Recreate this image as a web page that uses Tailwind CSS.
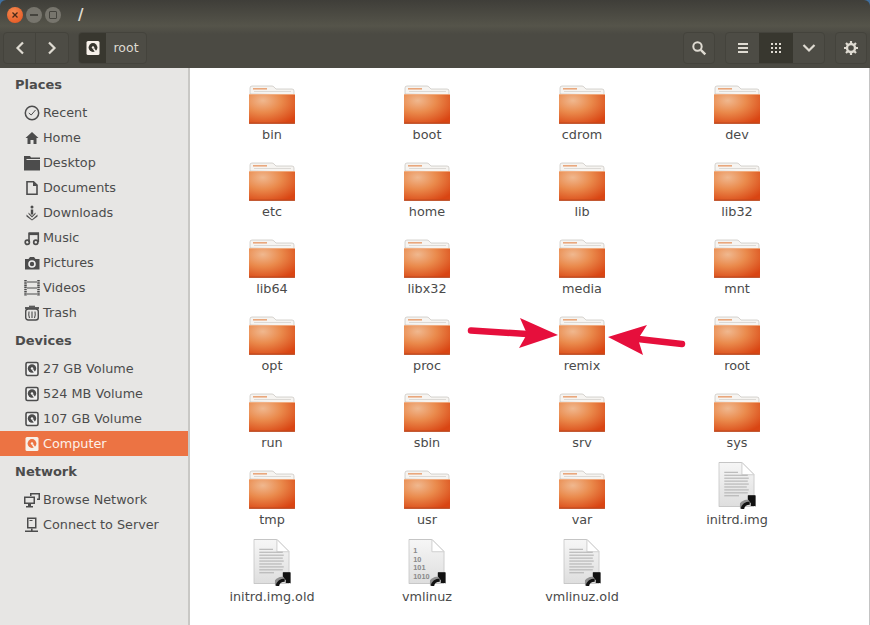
<!DOCTYPE html>
<html><head><meta charset="utf-8"><script src="https://cdn.jsdelivr.net/npm/@tailwindcss/browser@4"></script></head>
<body class="m-0 w-[870px] h-[625px] overflow-hidden bg-[#3f6f9f] font-['DejaVu_Sans',sans-serif] text-[12.8px] relative">
<svg width="0" height="0" class="absolute">
<defs>
<radialGradient id="fg" cx="0.3" cy="0.22" r="0.9"><stop offset="0" stop-color="#f0b88f"/><stop offset="0.45" stop-color="#ea8a4c"/><stop offset="1" stop-color="#d94513"/></radialGradient>
<linearGradient id="pg" x1="0" y1="0" x2="0" y2="1"><stop offset="0" stop-color="#f6f6f6"/><stop offset="1" stop-color="#dedede"/></linearGradient>
</defs>
<symbol id="folder" viewBox="0 0 46 38">
<path d="M1 8V2q0-2 2-2h20q1 0 2 1l2 2h16q2 0 2 2v4z" fill="#f6f4f1" stroke="#bdb9b4" stroke-width=".6"/>
<rect x="4" y="2" width="14" height="1.6" fill="#e9a77c"/>
<rect x="5" y="5" width="37" height="1" fill="#dcd9d5"/>
<rect x="0" y="8" width="46" height="29.5" rx="1" fill="url(#fg)"/>
<rect x="0" y="36.6" width="46" height="1.2" fill="#b9481f"/>
<rect x="0" y="8" width="46" height=".8" fill="#f2b48b"/>
</symbol>
<symbol id="link" viewBox="0 0 16 14">
<path d="M0 13.500C0 9 4 6 9 6" fill="none" stroke="#8f8f8f" stroke-width="3.500"/>
<path d="M2.500 14C3 10.500 6 8 10 8" fill="none" stroke="#111" stroke-width="3.500"/>
<path d="M8 0H16V12z" fill="#111"/>
<path d="M8 0H16V11H11V8L8 4z" fill="#111"/>
</symbol>
<symbol id="page" viewBox="0 0 37 46">
<path d="M.5.5H24L36.5 13V45.5H.5z" fill="url(#pg)" stroke="#c4c4c4"/>
<path d="M24 .5V13H36.5z" fill="#fff" stroke="#cfcfcf"/>
</symbol>
<symbol id="doc" viewBox="0 0 39 49">
<use href="#page" width="37" height="46"/>
<g fill="#adadad"><rect x="6" y="10" width="14" height="1"/><rect x="6" y="13" width="24" height="1"/><rect x="6" y="16" width="25" height="1"/><rect x="6" y="19" width="24" height="1"/><rect x="6" y="22" width="25" height="1"/><rect x="6" y="25" width="23" height="1"/><rect x="6" y="28" width="25" height="1"/><rect x="6" y="31" width="24" height="1"/><rect x="6" y="34" width="15" height="1"/></g>
<use href="#link" x="22" y="34" width="16" height="14"/>
</symbol>
<symbol id="disk" viewBox="0 0 16 16">
<rect x="2" y="1.500" width="12" height="13" rx="1.500" fill="#f2f2f2" stroke="currentColor" stroke-width="1.600"/>
<circle cx="8" cy="7.500" r="4.200" fill="currentColor"/><circle cx="8" cy="7.500" r="1.200" fill="#f2f2f2"/>
<path d="M8.500 8.500l2.600 3.600" stroke="#f2f2f2" stroke-width="1.400"/>
</symbol>
<symbol id="disk2" viewBox="0 0 16 16">
<rect x="1.500" y="1" width="13" height="14" rx="1.500" fill="#f7f1ea"/>
<circle cx="8" cy="7.500" r="4.400" fill="currentColor"/><circle cx="8" cy="7.500" r="1.200" fill="#f7f1ea"/>
<path d="M8.500 8.500l2.800 4" stroke="#f7f1ea" stroke-width="1.500"/>
</symbol>
</svg>

<!-- header -->
<header class="h-[68px] rounded-t-[6px] overflow-hidden bg-[linear-gradient(#3f3e39,#55544a_38%,#4b4a43_50%,#4b4a43)] flex flex-col">
  <div class="h-[30px] flex items-center pl-[7px] gap-[3px] text-[#dfdbd2]">
    <span class="w-[16px] h-[16px] rounded-full bg-[radial-gradient(circle_at_40%_30%,#f58a50,#e3501c)] flex items-center justify-center"><svg width="8" height="8" viewBox="0 0 8 8"><path d="M1.500 1.500l5 5M6.500 1.500l-5 5" stroke="#4a2a18" stroke-width="1.300"/></svg></span>
    <span class="w-[16px] h-[16px] rounded-full bg-[#77756d] flex items-center justify-center"><span class="w-[8px] h-[1.500px] bg-[#45443e]"></span></span>
    <span class="w-[16px] h-[16px] rounded-full bg-[#77756d] flex items-center justify-center"><span class="w-[8px] h-[8px] border-[1.500px] border-[#45443e] rounded-[1px]"></span></span>
    <span class="ml-[14px] text-[15px] font-bold">/</span>
  </div>
  <div class="h-[38px] flex items-start pt-[2px] px-[3px] text-[#dfdbd2]">
    <div class="flex h-[32px] w-[66px] rounded-[4px] border border-[#44433c] bg-[#4d4c45]">
      <span class="w-[32px] border-r border-[#44433c] flex items-center justify-center"><svg width="10" height="14" viewBox="0 0 10 14"><path d="M8 1.500L2.500 7 8 12.500" fill="none" stroke="currentColor" stroke-width="2.200"/></svg></span>
      <span class="flex-1 flex items-center justify-center"><svg width="10" height="14" viewBox="0 0 10 14"><path d="M2 1.500L7.500 7 2 12.500" fill="none" stroke="currentColor" stroke-width="2.200"/></svg></span>
    </div>
    <div class="flex h-[32px] w-[69px] ml-[9px] rounded-[4px] border border-[#44433c] bg-[#4d4c45] overflow-hidden">
      <span class="w-[27px] bg-[#38372f] flex items-center justify-center text-[#38372f]"><svg width="16" height="16"><use href="#disk2"/></svg></span>
      <span class="flex-1 flex items-center justify-center text-[12.500px]">root</span>
    </div>
    <div class="ml-auto flex h-[32px] w-[32px] rounded-[4px] border border-[#44433c] bg-[#4d4c45] items-center justify-center"><svg width="16" height="16" viewBox="0 0 16 16"><circle cx="6.500" cy="6.500" r="4.200" fill="none" stroke="currentColor" stroke-width="2"/><path d="M9.800 9.800l4.500 4.500" stroke="currentColor" stroke-width="2.400"/></svg></div>
    <div class="ml-[10px] flex h-[32px] w-[100px] rounded-[4px] border border-[#44433c] bg-[#4d4c45] overflow-hidden">
      <span class="w-[33px] flex items-center justify-center"><svg width="12" height="12" viewBox="0 0 12 12" fill="currentColor"><rect x="1" y="1" width="10" height="2"/><rect x="1" y="5" width="10" height="2"/><rect x="1" y="9" width="10" height="2"/></svg></span>
      <span class="w-[34px] bg-[#38372f] flex items-center justify-center"><svg width="12" height="12" viewBox="0 0 12 12" fill="currentColor"><rect x="1" y="1" width="2" height="2"/><rect x="5" y="1" width="2" height="2"/><rect x="9" y="1" width="2" height="2"/><rect x="1" y="5" width="2" height="2"/><rect x="5" y="5" width="2" height="2"/><rect x="9" y="5" width="2" height="2"/><rect x="1" y="9" width="2" height="2"/><rect x="5" y="9" width="2" height="2"/><rect x="9" y="9" width="2" height="2"/></svg></span>
      <span class="flex-1 flex items-center justify-center"><svg width="14" height="10" viewBox="0 0 14 10"><path d="M1.500 2L7 7.500 12.500 2" fill="none" stroke="currentColor" stroke-width="2.200"/></svg></span>
    </div>
    <div class="ml-[10px] flex h-[32px] w-[32px] rounded-[4px] border border-[#44433c] bg-[#4d4c45] items-center justify-center"><svg width="16" height="16" viewBox="0 0 16 16"><circle cx="8" cy="8" r="4" fill="none" stroke="currentColor" stroke-width="2.400"/><path d="M8 1v3M8 12v3M1 8h3M12 8h3M3 3l2.200 2.200M10.800 10.800L13 13M13 3l-2.200 2.200M5.200 10.800L3 13" stroke="currentColor" stroke-width="2.200"/></svg></div>
  </div>
</header>

<div class="flex h-[557px]">
  <!-- sidebar -->
  <aside class="w-[190px] shrink-0 bg-[#e7e6e4] border-r-2 border-[#c9c8c5] text-[#4c4c4c]">
    <h3 class="h-[32px] pl-[15px] pt-[2px] flex items-center font-bold text-[13px]">Places</h3>
    <ul>
      <li class="h-[25px] pl-[24px] flex items-center gap-[3px]"><svg class="w-[16px] h-[16px]" viewBox="0 0 16 16"><circle cx="8" cy="8" r="6.700" fill="none" stroke="currentColor" stroke-width="1.500"/><path d="M4.800 8l2.400 2L11.500 5" fill="none" stroke="currentColor" stroke-width="1"/></svg>Recent</li>
      <li class="h-[25px] pl-[24px] flex items-center gap-[3px]"><svg class="w-[16px] h-[16px]" viewBox="0 0 16 16" fill="currentColor"><path d="M8 2L1.500 8H3.500V14H6.500V10H9.500V14H12.500V8H14.500z"/></svg>Home</li>
      <li class="h-[25px] pl-[24px] flex items-center gap-[3px]"><svg class="w-[16px] h-[16px]" viewBox="0 0 16 16" fill="currentColor"><path d="M0 1H6L7 2.500H16V4H2.500V5H16V15.500H0z"/></svg>Desktop</li>
      <li class="h-[25px] pl-[24px] flex items-center gap-[3px]"><svg class="w-[16px] h-[16px]" viewBox="0 0 16 16"><path d="M3 1.700H9.500L13 5V14.300H3z" fill="none" stroke="currentColor" stroke-width="1.600"/><path d="M9 1.500V6H13.500" fill="currentColor"/></svg>Documents</li>
      <li class="h-[25px] pl-[24px] flex items-center gap-[3px]"><svg class="w-[16px] h-[16px]" viewBox="0 0 16 16" fill="currentColor"><circle cx="8" cy="2" r="1.500"/><rect x="6.800" y="4.500" width="2.400" height="5"/><path d="M4.500 7.500L8 11l3.500-3.500v1.500L8 12.500 4.500 9z"/><path d="M2.500 9.500L8 14.500l5.500-5v2L8 15.500l-5.500-4z"/></svg>Downloads</li>
      <li class="h-[25px] pl-[24px] flex items-center gap-[3px]"><svg class="w-[16px] h-[16px]" viewBox="0 0 16 16"><path d="M5 12V3.200H14.300V12" fill="none" stroke="currentColor" stroke-width="1.600"/><rect x="5" y="2.500" width="10" height="2.600" fill="currentColor"/><circle cx="3.300" cy="12.300" r="2.100" fill="none" stroke="currentColor" stroke-width="1.700"/><circle cx="11.800" cy="12.300" r="2.100" fill="none" stroke="currentColor" stroke-width="1.700"/></svg>Music</li>
      <li class="h-[25px] pl-[24px] flex items-center gap-[3px]"><svg class="w-[16px] h-[16px]" viewBox="0 0 16 16"><path d="M1 4H4.500L6 2H10L11.500 4H15.500V14.500H1z" fill="currentColor"/><circle cx="8" cy="9" r="3" fill="none" stroke="#eee" stroke-width="1.600"/></svg>Pictures</li>
      <li class="h-[25px] pl-[24px] flex items-center gap-[3px]"><svg class="w-[16px] h-[16px]" viewBox="0 0 16 16" fill="none" stroke="currentColor"><path d="M1.500 0V16M14.500 0V16" stroke-width="2.500" stroke-dasharray="1.500 .7"/><path d="M3 2H13M3 8H13M3 14H13" stroke-width="1.200"/></svg>Videos</li>
      <li class="h-[25px] pl-[24px] flex items-center gap-[3px]"><svg class="w-[16px] h-[16px]" viewBox="0 0 16 16" fill="none" stroke="currentColor"><path d="M1 3H15" stroke-width="1.800"/><path d="M5 1.300H11" stroke-width="1.200"/><rect x="1.700" y="4" width="12.600" height="11" rx="2.500" stroke-width="1.400"/><path d="M5 6.500Q4.300 10 5.500 13M8 6.500V13M11 6.500Q11.700 10 10.500 13" stroke-width="1.100"/></svg>Trash</li>
    </ul>
    <h3 class="h-[31px] pl-[15px] flex items-center font-bold text-[13px]">Devices</h3>
    <ul>
      <li class="h-[25px] pl-[24px] flex items-center gap-[3px]"><svg class="w-[16px] h-[16px]"><use href="#disk"/></svg>27 GB Volume</li>
      <li class="h-[25px] pl-[24px] flex items-center gap-[3px]"><svg class="w-[16px] h-[16px]"><use href="#disk"/></svg>524 MB Volume</li>
      <li class="h-[25px] pl-[24px] flex items-center gap-[3px]"><svg class="w-[16px] h-[16px]"><use href="#disk"/></svg>107 GB Volume</li>
      <li class="h-[25px] pl-[24px] flex items-center gap-[3px] bg-[#ec7343] text-[#fdf1ea]"><svg class="w-[16px] h-[16px] text-[#ec7343]"><use href="#disk2"/></svg>Computer</li>
    </ul>
    <h3 class="h-[31px] pl-[15px] flex items-center font-bold text-[13px]">Network</h3>
    <ul>
      <li class="h-[25px] pl-[24px] flex items-center gap-[3px]"><svg class="w-[16px] h-[16px]" viewBox="0 0 16 16" fill="currentColor"><path d="M6 1H16V8H13V6.500H14.500V2.500H7.500V4H6z"/><path d="M0 4.500H11V12H0zM2 14H9V15.500H2zM4 12H7V14H4z"/><rect x="1.500" y="6" width="8" height="4.500" fill="#e7e6e4"/></svg>Browse Network</li>
      <li class="h-[25px] pl-[24px] flex items-center gap-[3px]"><svg class="w-[16px] h-[16px]" viewBox="0 0 16 16" fill="currentColor"><path d="M3 .5H12.500V11.500H3zM4.500 2V10H11V2z"/><rect x="5.500" y="3" width="3" height="1"/><rect x="7" y="11.500" width="1.600" height="2.500"/><rect x="1" y="13.500" width="13" height="1.500"/></svg>Connect to Server</li>
    </ul>
  </aside>

  <!-- files -->
  <main class="flex-1 bg-white border-r border-[#c4c4c4] pt-[9px] pl-[4.500px] grid grid-cols-[repeat(4,155px)] auto-rows-[77px] text-[#4a4a4a] text-center">
    <div class="flex flex-col items-center"><svg class="w-[46px] h-[48px] pt-[8px]"><use href="#folder"/></svg><span class="leading-[20px]">bin</span></div>
    <div class="flex flex-col items-center"><svg class="w-[46px] h-[48px] pt-[8px]"><use href="#folder"/></svg><span class="leading-[20px]">boot</span></div>
    <div class="flex flex-col items-center"><svg class="w-[46px] h-[48px] pt-[8px]"><use href="#folder"/></svg><span class="leading-[20px]">cdrom</span></div>
    <div class="flex flex-col items-center"><svg class="w-[46px] h-[48px] pt-[8px]"><use href="#folder"/></svg><span class="leading-[20px]">dev</span></div>
    <div class="flex flex-col items-center"><svg class="w-[46px] h-[48px] pt-[8px]"><use href="#folder"/></svg><span class="leading-[20px]">etc</span></div>
    <div class="flex flex-col items-center"><svg class="w-[46px] h-[48px] pt-[8px]"><use href="#folder"/></svg><span class="leading-[20px]">home</span></div>
    <div class="flex flex-col items-center"><svg class="w-[46px] h-[48px] pt-[8px]"><use href="#folder"/></svg><span class="leading-[20px]">lib</span></div>
    <div class="flex flex-col items-center"><svg class="w-[46px] h-[48px] pt-[8px]"><use href="#folder"/></svg><span class="leading-[20px]">lib32</span></div>
    <div class="flex flex-col items-center"><svg class="w-[46px] h-[48px] pt-[8px]"><use href="#folder"/></svg><span class="leading-[20px]">lib64</span></div>
    <div class="flex flex-col items-center"><svg class="w-[46px] h-[48px] pt-[8px]"><use href="#folder"/></svg><span class="leading-[20px]">libx32</span></div>
    <div class="flex flex-col items-center"><svg class="w-[46px] h-[48px] pt-[8px]"><use href="#folder"/></svg><span class="leading-[20px]">media</span></div>
    <div class="flex flex-col items-center"><svg class="w-[46px] h-[48px] pt-[8px]"><use href="#folder"/></svg><span class="leading-[20px]">mnt</span></div>
    <div class="flex flex-col items-center"><svg class="w-[46px] h-[48px] pt-[8px]"><use href="#folder"/></svg><span class="leading-[20px]">opt</span></div>
    <div class="flex flex-col items-center"><svg class="w-[46px] h-[48px] pt-[8px]"><use href="#folder"/></svg><span class="leading-[20px]">proc</span></div>
    <div class="flex flex-col items-center"><svg class="w-[46px] h-[48px] pt-[8px]"><use href="#folder"/></svg><span class="leading-[20px]">remix</span></div>
    <div class="flex flex-col items-center"><svg class="w-[46px] h-[48px] pt-[8px]"><use href="#folder"/></svg><span class="leading-[20px]">root</span></div>
    <div class="flex flex-col items-center"><svg class="w-[46px] h-[48px] pt-[8px]"><use href="#folder"/></svg><span class="leading-[20px]">run</span></div>
    <div class="flex flex-col items-center"><svg class="w-[46px] h-[48px] pt-[8px]"><use href="#folder"/></svg><span class="leading-[20px]">sbin</span></div>
    <div class="flex flex-col items-center"><svg class="w-[46px] h-[48px] pt-[8px]"><use href="#folder"/></svg><span class="leading-[20px]">srv</span></div>
    <div class="flex flex-col items-center"><svg class="w-[46px] h-[48px] pt-[8px]"><use href="#folder"/></svg><span class="leading-[20px]">sys</span></div>
    <div class="flex flex-col items-center"><svg class="w-[46px] h-[48px] pt-[8px]"><use href="#folder"/></svg><span class="leading-[20px]">tmp</span></div>
    <div class="flex flex-col items-center"><svg class="w-[46px] h-[48px] pt-[8px]"><use href="#folder"/></svg><span class="leading-[20px]">usr</span></div>
    <div class="flex flex-col items-center"><svg class="w-[46px] h-[48px] pt-[8px]"><use href="#folder"/></svg><span class="leading-[20px]">var</span></div>
    <div class="flex flex-col items-center"><svg class="w-[39px] h-[48px]" viewBox="0 0 39 49"><use href="#doc"/></svg><span class="leading-[20px]">initrd.img</span></div>
    <div class="flex flex-col items-center"><svg class="w-[39px] h-[48px]" viewBox="0 0 39 49"><use href="#doc"/></svg><span class="leading-[20px]">initrd.img.old</span></div>
    <div class="flex flex-col items-center"><svg class="w-[39px] h-[48px]" viewBox="0 0 39 49"><use href="#page" width="37" height="46"/><text x="5" y="14" font-size="7.500" font-weight="bold" fill="#8a8a8a" font-family="Liberation Sans">1</text><text x="5" y="23" font-size="7.500" font-weight="bold" fill="#8a8a8a" font-family="Liberation Sans">10</text><text x="5" y="32" font-size="7.500" font-weight="bold" fill="#8a8a8a" font-family="Liberation Sans">101</text><text x="5" y="41" font-size="7.500" font-weight="bold" fill="#8a8a8a" font-family="Liberation Sans">1010</text><use href="#link" x="22" y="34" width="16" height="14"/></svg><span class="leading-[20px]">vmlinuz</span></div>
    <div class="flex flex-col items-center"><svg class="w-[39px] h-[48px]" viewBox="0 0 39 49"><use href="#doc"/></svg><span class="leading-[20px]">vmlinuz.old</span></div>
  </main>
</div>

<!-- annotation arrows -->
<svg class="absolute left-0 top-0 pointer-events-none" width="870" height="625" viewBox="0 0 870 625">
  <path d="M471 330.500L527 334" stroke="#e60f3c" stroke-width="6.500" stroke-linecap="round" fill="none"/>
  <path d="M520 318L558 335L519 348L527 334z" fill="#e60f3c"/>
  <path d="M682 344L638 339" stroke="#e60f3c" stroke-width="6.500" stroke-linecap="round" fill="none"/>
  <path d="M647 325L608 337L643 355L638 339z" fill="#e60f3c"/>
</svg>
</body></html>
